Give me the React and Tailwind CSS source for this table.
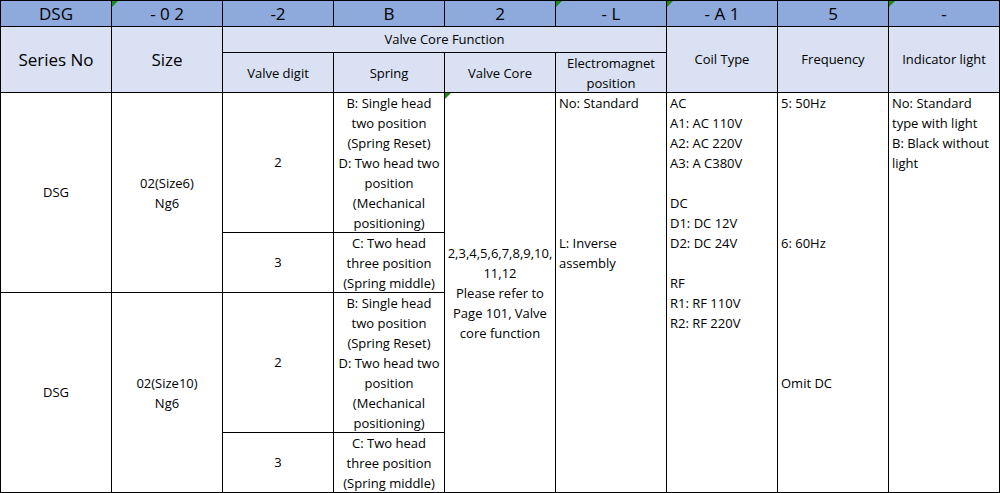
import React from "react";

const Tri = () => (
  <span className="absolute left-0 top-0 h-0 w-0 border-t-[6px] border-r-[6px] border-t-[#1a8a1a] border-r-transparent" />
);

const Lines = ({ lines, className = "" }) => (
  <div className={className}>
    {lines.map((l, i) => (
      <div key={i} className="h-[20px] leading-[20px] whitespace-nowrap">
        {l === "" ? "\u00a0" : l}
      </div>
    ))}
  </div>
);

const base = "relative border-r border-b border-black";
const center = "flex flex-col items-center justify-center text-center";

export default function App() {
  const top = ["DSG", "- 0 2", "-2", "B", "2", "- L", "- A 1", "5", "-"];
  const triTop = [1, 5, 6, 8];
  return (
    <div
      className="w-[1000px] h-[493px] bg-white text-black overflow-hidden"
      style={{ fontFamily: '"Open Sans", "Noto Sans", sans-serif' }}
    >
      <div className="grid w-[1000px] grid-cols-[repeat(9,111px)] grid-rows-[26px_26px_40px_140px_60px_140px_60px] border-l border-t border-black text-[13px]">
        {top.map((t, i) => (
          <div
            key={i}
            className={`${base} ${center} bg-[#8ea9db] text-[17px] leading-[24px] row-start-1`}
            style={{ gridColumnStart: i + 1 }}
          >
            {triTop.includes(i) && <Tri />}
            <span className="whitespace-pre">{t}</span>
          </div>
        ))}

        <div className={`${base} ${center} bg-[#d9e1f2] col-start-1 row-start-2 row-span-2 text-[17px]`}>
          Series No
        </div>
        <div className={`${base} ${center} bg-[#d9e1f2] col-start-2 row-start-2 row-span-2 text-[17px]`}>
          Size
        </div>
        <div className={`${base} ${center} bg-[#d9e1f2] col-start-3 col-span-4 row-start-2`}>
          Valve Core Function
        </div>
        <div className={`${base} ${center} bg-[#d9e1f2] col-start-7 row-start-2 row-span-2`}>
          Coil Type
        </div>
        <div className={`${base} ${center} bg-[#d9e1f2] col-start-8 row-start-2 row-span-2`}>
          Frequency
        </div>
        <div className={`${base} ${center} bg-[#d9e1f2] col-start-9 row-start-2 row-span-2`}>
          Indicator light
        </div>
        <div className={`${base} ${center} bg-[#d9e1f2] col-start-3 row-start-3`}>
          <span className="pt-[2px]">Valve digit</span>
        </div>
        <div className={`${base} ${center} bg-[#d9e1f2] col-start-4 row-start-3`}>
          <span className="pt-[2px]">Spring</span>
        </div>
        <div className={`${base} ${center} bg-[#d9e1f2] col-start-5 row-start-3`}>
          <span className="pt-[2px]">Valve Core</span>
        </div>
        <div className={`${base} ${center} bg-[#d9e1f2] col-start-6 row-start-3`}>
          <Lines lines={["Electromagnet", "position"]} />
        </div>

        {/* Group 1 */}
        <div className={`${base} ${center} col-start-1 row-start-4 row-span-2`}>DSG</div>
        <div className={`${base} ${center} col-start-2 row-start-4 row-span-2`}>
          <Lines lines={["02(Size6)", "Ng6"]} />
        </div>
        <div className={`${base} ${center} col-start-3 row-start-4`}>2</div>
        <div className={`${base} ${center} col-start-3 row-start-5`}>3</div>
        <div className={`${base} flex flex-col items-center text-center col-start-4 row-start-4`}>
          <Lines
            lines={[
              "B: Single head",
              "two position",
              "(Spring Reset)",
              "D: Two head two",
              "position",
              "(Mechanical",
              "positioning)",
            ]}
          />
        </div>
        <div className={`${base} flex flex-col items-center text-center col-start-4 row-start-5`}>
          <Lines lines={["C: Two head", "three position", "(Spring middle)"]} />
        </div>

        {/* Group 2 */}
        <div className={`${base} ${center} col-start-1 row-start-6 row-span-2`}>DSG</div>
        <div className={`${base} ${center} col-start-2 row-start-6 row-span-2`}>
          <Lines lines={["02(Size10)", "Ng6"]} />
        </div>
        <div className={`${base} ${center} col-start-3 row-start-6`}>2</div>
        <div className={`${base} ${center} col-start-3 row-start-7`}>3</div>
        <div className={`${base} flex flex-col items-center text-center col-start-4 row-start-6`}>
          <Lines
            lines={[
              "B: Single head",
              "two position",
              "(Spring Reset)",
              "D: Two head two",
              "position",
              "(Mechanical",
              "positioning)",
            ]}
          />
        </div>
        <div className={`${base} flex flex-col items-center text-center col-start-4 row-start-7`}>
          <Lines lines={["C: Two head", "three position", "(Spring middle)"]} />
        </div>

        {/* Merged columns */}
        <div className={`${base} ${center} col-start-5 row-start-4 row-span-4`}>
          <Tri />
          <Lines
            lines={[
              "2,3,4,5,6,7,8,9,10,",
              "11,12",
              "Please refer to",
              "Page 101, Valve",
              "core function",
            ]}
          />
        </div>
        <div className={`${base} col-start-6 row-start-4 row-span-4 pl-[3px]`}>
          <Lines lines={["No: Standard", "", "", "", "", "", "", "L: Inverse", "assembly"]} />
        </div>
        <div className={`${base} col-start-7 row-start-4 row-span-4 pl-[3px]`}>
          <Lines
            lines={[
              "AC",
              "A1: AC 110V",
              "A2: AC 220V",
              "A3: A C380V",
              "",
              "DC",
              "D1: DC 12V",
              "D2: DC 24V",
              "",
              "RF",
              "R1: RF 110V",
              "R2: RF 220V",
            ]}
          />
        </div>
        <div className={`${base} col-start-8 row-start-4 row-span-4 pl-[3px]`}>
          <Lines
            lines={[
              "5: 50Hz",
              "", "", "", "", "", "",
              "6: 60Hz",
              "", "", "", "", "", "",
              "Omit DC",
            ]}
          />
        </div>
        <div className={`${base} col-start-9 row-start-4 row-span-4 pl-[3px]`}>
          <Lines lines={["No: Standard", "type with light", "B: Black without", "light"]} />
        </div>
      </div>
    </div>
  );
}
